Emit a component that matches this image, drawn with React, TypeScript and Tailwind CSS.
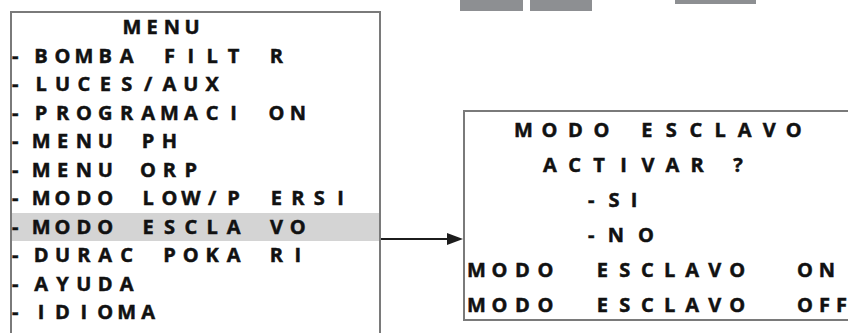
import React from "react";

const ch = (c: string) => (c === " " ? "\u00a0" : c);

const LeftRow = ({ text, active }: { text: string; active?: boolean }) => (
  <div className={"flex h-[28.5px] items-center " + (active ? "bg-[#d4d4d4]" : "")}>
    <span className="w-[18.4px] shrink-0">-</span>
    {text.split("").map((c, i) => (
      <span key={i} className="w-[21.4px] shrink-0 text-center">
        {ch(c)}
      </span>
    ))}
  </div>
);

const Word = ({ text, cell }: { text: string; cell: string }) => (
  <>
    {text.split("").map((c, i) => (
      <span key={i} className={cell + " shrink-0 text-center"}>
        {c}
      </span>
    ))}
  </>
);

export default function App() {
  const items = [
    "BOMBA FILT R",
    "LUCES/AUX",
    "PROGRAMACI ON",
    "MENU PH",
    "MENU ORP",
    "MODO LOW/P ERSI",
    "MODO ESCLA VO",
    "DURAC POKA RI",
    "AYUDA",
    "IDIOMA",
  ];
  return (
    <div className="w-[848px] h-[333px] overflow-hidden bg-white font-['Open_Sans',sans-serif] font-bold text-[20px] leading-none text-[#111111] [-webkit-text-stroke:0.5px_#111111]">
      <div className="flex h-[11px] items-start">
        <div className="ml-[460px] w-[63px] h-[11px] bg-[#8d8f92]" />
        <div className="ml-[7px] w-[62px] h-[11px] bg-[#8d8f92]" />
        <div className="ml-[83px] w-[81px] h-[4px] bg-[#8d8f92]" />
      </div>
      <div className="flex items-start h-[322px]">
        <div className="ml-[10px] w-[371px] h-[322px] shrink-0 border-2 border-b-0 border-[#7a7a7a] flex flex-col">
          <div className="flex h-[28.5px] items-center pl-[110px]">
            <Word text="MENU" cell="w-[20px]" />
          </div>
          {items.map((t, i) => (
            <LeftRow key={i} text={t} active={i === 6} />
          ))}
        </div>
        <div className="w-[82px] shrink-0 mt-[220px]">
          <svg width="82" height="16" viewBox="0 0 82 16" className="block">
            <line x1="0" y1="8" x2="70" y2="8" stroke="#1c1c1c" strokeWidth="2" />
            <polygon points="66,2 82,8 66,14" fill="#1c1c1c" />
          </svg>
        </div>
        <div className="mt-[99px] flex-1 h-[211px] border-2 border-r-0 border-[#7a7a7a] flex flex-col overflow-hidden">
          <div className="flex h-[35px] shrink-0 items-center pl-[45.5px]">
            <Word text="MODO" cell="w-[26px]" />
            <span className="w-[20px] shrink-0" />
            <Word text="ESCLAVO" cell="w-[24.5px]" />
          </div>
          <div className="flex h-[35px] shrink-0 items-center pl-[72.75px]">
            <Word text="ACTIVAR" cell="w-[24.5px]" />
            <span className="w-[16.5px] shrink-0" />
            <Word text="?" cell="w-[24.5px]" />
          </div>
          <div className="flex h-[35px] shrink-0 items-center pl-[123px]">
            <span className="w-[16px] shrink-0">-</span>
            <span className="w-[20px] shrink-0 text-center">S</span>
            <span className="w-[20px] shrink-0 text-center">I</span>
          </div>
          <div className="flex h-[35px] shrink-0 items-center pl-[123px]">
            <span className="w-[16px] shrink-0">-</span>
            <span className="w-[24px] shrink-0 text-center">N</span>
            <span className="w-[36px] shrink-0 text-center">O</span>
          </div>
          <div className="flex h-[35px] shrink-0 items-center">
            <Word text="MODO" cell="w-[23px]" />
            <span className="w-[34px] shrink-0" />
            <Word text="ESCLAVO" cell="w-[22.5px]" />
            <span className="w-[45.5px] shrink-0" />
            <span className="w-[22px] shrink-0 text-center">O</span>
            <span className="w-[22px] shrink-0 text-center">N</span>
          </div>
          <div className="flex h-[35px] shrink-0 items-center">
            <Word text="MODO" cell="w-[23px]" />
            <span className="w-[34px] shrink-0" />
            <Word text="ESCLAVO" cell="w-[22.5px]" />
            <span className="w-[45.5px] shrink-0" />
            <span className="w-[22px] shrink-0 text-center">O</span>
            <span className="w-[17px] shrink-0 text-center">F</span>
            <span className="w-[17px] shrink-0 text-center">F</span>
          </div>
        </div>
      </div>
    </div>
  );
}
